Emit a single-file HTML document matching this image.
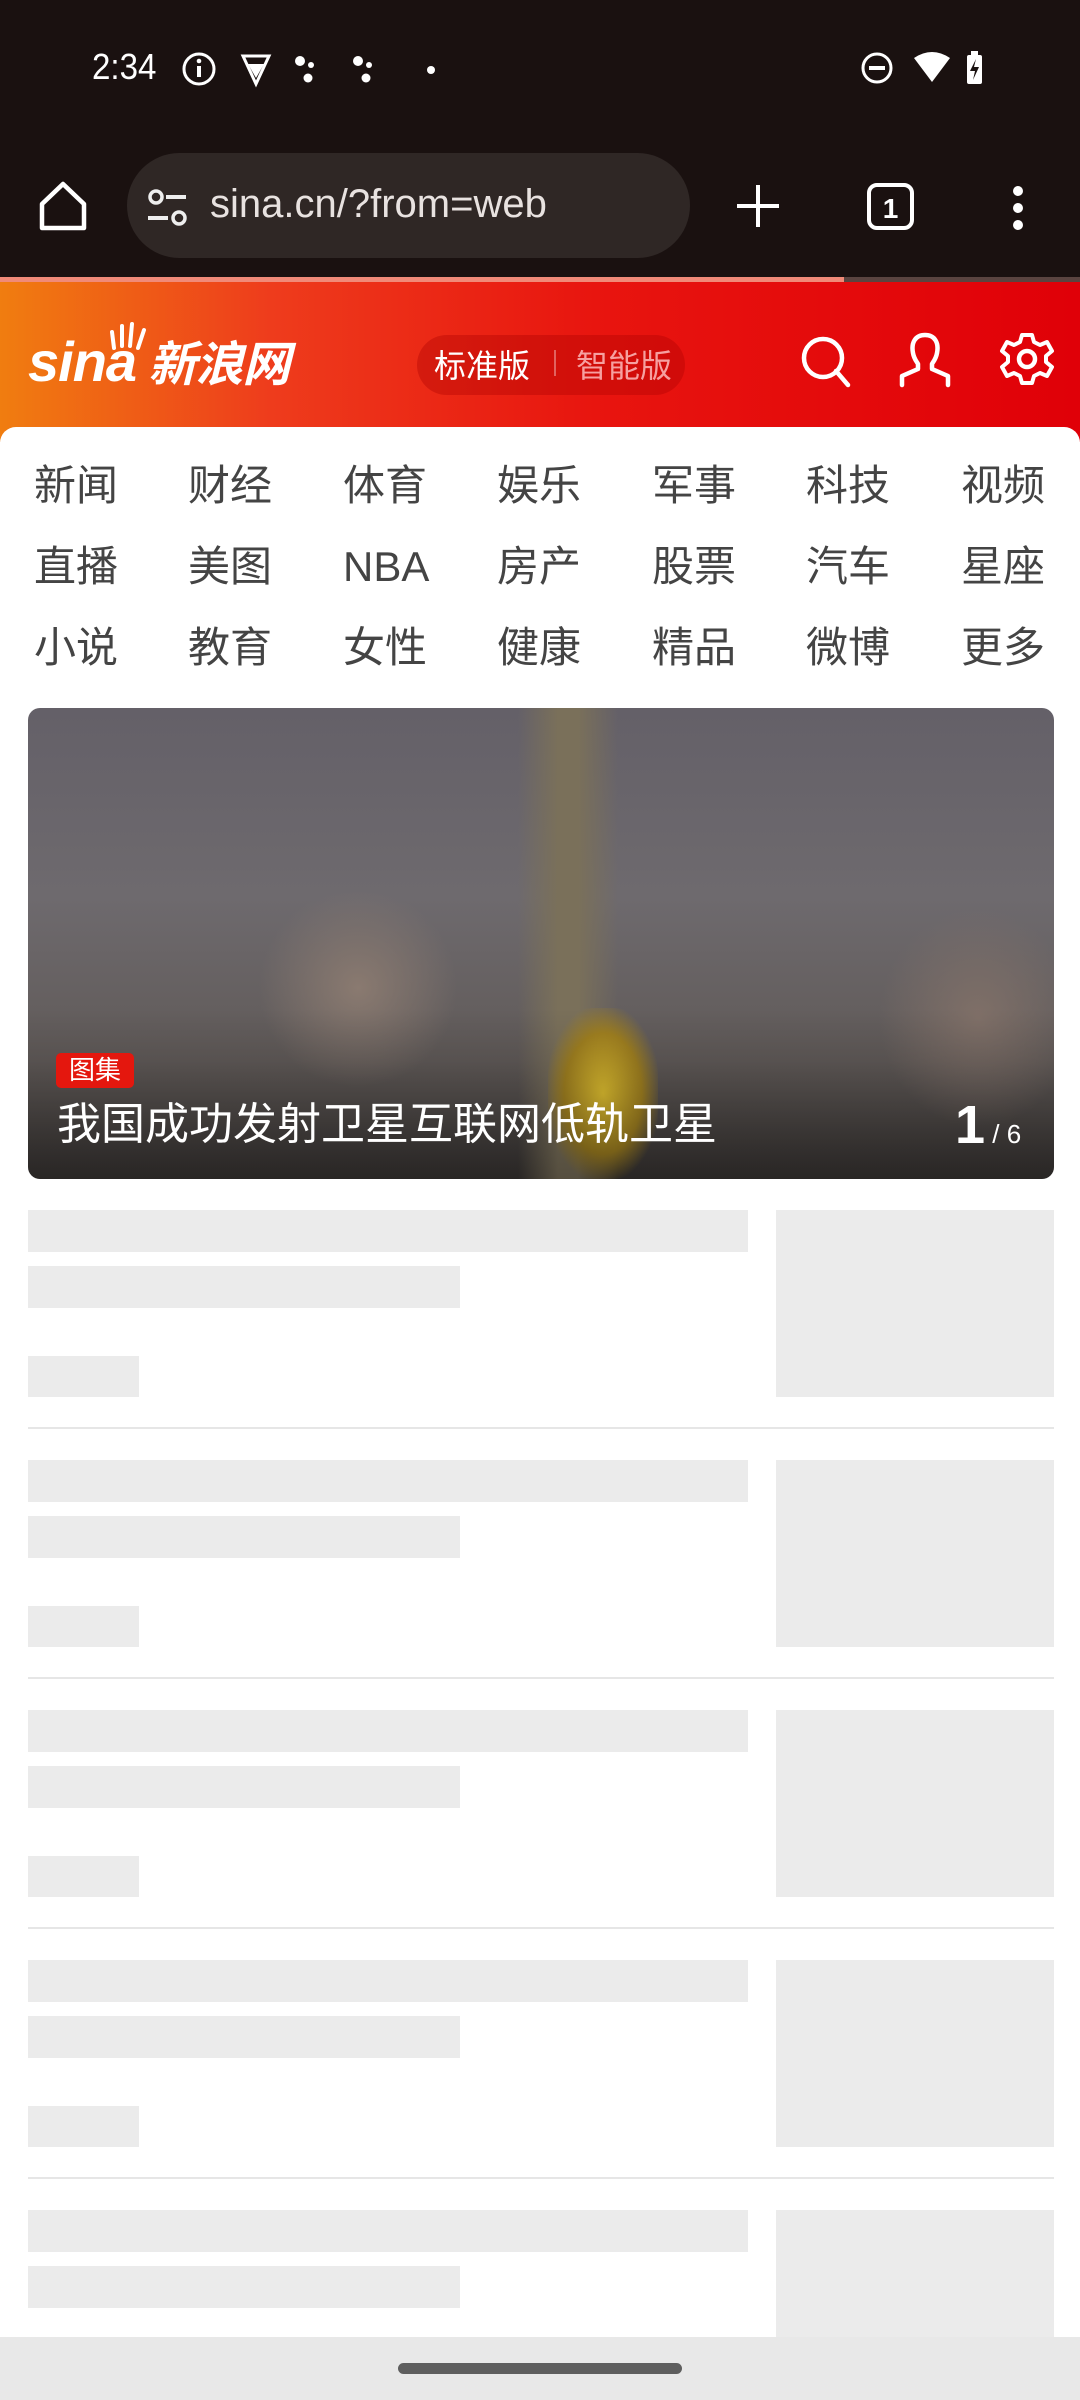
<!DOCTYPE html>
<html><head><meta charset="utf-8"><style>
*{margin:0;padding:0;box-sizing:border-box}
body{width:1080px;height:2400px;overflow:hidden;background:#fff;font-family:"Liberation Sans","Noto Sans CJK SC",sans-serif;position:relative}
.abs{position:absolute}
.sk{position:absolute;background:#ebebeb}
.nav{position:absolute;font-size:42px;color:#444;line-height:42px;white-space:nowrap}
</style></head><body>
<div class="abs" style="left:0;top:0;width:1080px;height:282px;background:#1a1110"></div>
<div class="abs" style="left:92px;top:46px;color:#fff;font-size:36px;transform:scaleX(0.92);transform-origin:left">2:34</div>
<svg class="abs" style="left:180px;top:50px" width="260" height="40" viewBox="0 0 260 40">
<circle cx="19" cy="19" r="15" fill="none" stroke="#fff" stroke-width="3"/><rect x="17" y="16" width="4" height="11" fill="#fff"/><circle cx="19" cy="11" r="2.3" fill="#fff"/>
<path d="M63 6 L89 6 L76 34 Z" fill="none" stroke="#fff" stroke-width="3"/><path d="M68 14 L84 14 L76 28Z" fill="#fff"/>
<circle cx="120" cy="11" r="5" fill="#fff"/><circle cx="131" cy="15" r="3" fill="#fff"/><circle cx="128" cy="28" r="4.5" fill="#fff"/>
<circle cx="178" cy="11" r="5" fill="#fff"/><circle cx="189" cy="15" r="3" fill="#fff"/><circle cx="186" cy="28" r="4.5" fill="#fff"/>
<circle cx="251" cy="20" r="4" fill="#fff"/></svg>
<svg class="abs" style="left:858px;top:48px" width="140" height="42" viewBox="0 0 140 42">
<circle cx="19" cy="20" r="14" fill="none" stroke="#fff" stroke-width="3"/><rect x="11" y="18" width="16" height="4" fill="#fff"/>
<path d="M56 10 Q74 -2 92 10 L74 34 Z" fill="#fff"/>
<rect x="109" y="7" width="15" height="29" rx="2" fill="#fff"/><rect x="113" y="3" width="7" height="5" fill="#fff"/><path d="M118 11 L112 23 L117 23 L115 32 L121 19 L116 19Z" fill="#1a1110"/></svg>
<svg class="abs" style="left:38px;top:180px" width="50" height="52" viewBox="0 0 50 52"><path d="M4 48 L4 24 L25 4 L46 24 L46 48 Z" fill="none" stroke="#fff" stroke-width="4.5" stroke-linejoin="round"/></svg>
<div class="abs" style="left:127px;top:153px;width:563px;height:105px;border-radius:53px;background:#2f2725"></div>
<svg class="abs" style="left:146px;top:188px" width="44" height="42" viewBox="0 0 44 42"><circle cx="10" cy="9" r="6" fill="none" stroke="#eee" stroke-width="3.5"/><rect x="20" y="7" width="20" height="4" fill="#eee"/><rect x="2" y="28" width="20" height="4" fill="#eee"/><circle cx="33" cy="30" r="6" fill="none" stroke="#eee" stroke-width="3.5"/></svg>
<div class="abs" style="left:210px;top:182px;color:#e8e2e0;font-size:40px">sina.cn/?from=web</div>
<svg class="abs" style="left:735px;top:183px" width="46" height="46"><rect x="21" y="2" width="4" height="42" fill="#fff"/><rect x="2" y="21" width="42" height="4" fill="#fff"/></svg>
<svg class="abs" style="left:866px;top:182px" width="50" height="50"><rect x="3" y="3" width="43" height="43" rx="8" fill="none" stroke="#fff" stroke-width="4"/><text x="24.5" y="36" font-size="28" fill="#fff" text-anchor="middle" font-family="Liberation Sans" font-weight="bold">1</text></svg>
<svg class="abs" style="left:1008px;top:183px" width="20" height="50"><circle cx="10" cy="8" r="5" fill="#fff"/><circle cx="10" cy="25" r="5" fill="#fff"/><circle cx="10" cy="42" r="5" fill="#fff"/></svg>
<div class="abs" style="left:0;top:277px;width:844px;height:5px;background:#f08a78"></div>
<div class="abs" style="left:844px;top:277px;width:236px;height:5px;background:#5a4440"></div>
<div class="abs" style="left:0;top:282px;width:1080px;height:160px;background:linear-gradient(90deg,#f07d10 0%,#ee3c1c 25%,#e8150f 55%,#e00008 100%)"></div>
<svg class="abs" style="left:108px;top:320px" width="40" height="32"><path d="M6 28 L4 12 M14 26 L14 6 M22 26 L24 4 M30 28 L36 10" stroke="#fff" stroke-width="4" stroke-linecap="round"/></svg>
<div class="abs" style="left:28px;top:332px;color:#fff;font-size:56px;font-style:italic;font-weight:bold;letter-spacing:-1px;line-height:60px">sina<span style="font-size:48px"> 新浪网</span></div>
<div class="abs" style="left:417px;top:335px;width:268px;height:60px;border-radius:30px;background:rgba(170,0,0,0.35)"></div>
<div class="abs" style="left:434px;top:341px;color:#fff;font-size:32px">标准版</div>
<div class="abs" style="left:554px;top:350px;width:2px;height:26px;background:rgba(255,255,255,.35)"></div>
<div class="abs" style="left:576px;top:341px;color:#f6a0a0;font-size:32px">智能版</div>
<svg class="abs" style="left:798px;top:333px" width="56" height="56"><circle cx="25" cy="25" r="19" fill="none" stroke="#fff" stroke-width="4.5"/><path d="M38 38 L50 52" stroke="#fff" stroke-width="4.5" stroke-linecap="round"/></svg>
<svg class="abs" style="left:896px;top:331px" width="58" height="58"><path d="M29 4 C19 4 15 12 17 22 C18 28 21 31 22 33 L22 38 L6 45 L6 54 M29 4 C39 4 43 12 41 22 C40 28 37 31 36 33 L36 38 L52 45 L52 54" fill="none" stroke="#fff" stroke-width="4.5" stroke-linecap="round" stroke-linejoin="round"/></svg>
<svg class="abs" style="left:998px;top:330px" width="58" height="58" viewBox="0 0 58 58"><path d="M24 5 L34 5 L36 12 L42 15 L49 12 L54 21 L48 26 L48 32 L54 37 L49 46 L42 43 L36 46 L34 53 L24 53 L22 46 L16 43 L9 46 L4 37 L10 32 L10 26 L4 21 L9 12 L16 15 L22 12 Z" fill="none" stroke="#fff" stroke-width="4" stroke-linejoin="round"/><circle cx="29" cy="29" r="8" fill="none" stroke="#fff" stroke-width="4.5"/></svg>
<div class="abs" style="left:0;top:427px;width:1080px;height:40px;background:#fff;border-radius:16px 16px 0 0"></div>
<div class="nav" style="left:34px;top:465px">新闻</div><div class="nav" style="left:188px;top:465px">财经</div><div class="nav" style="left:343px;top:465px">体育</div><div class="nav" style="left:497px;top:465px">娱乐</div><div class="nav" style="left:652px;top:465px">军事</div><div class="nav" style="left:806px;top:465px">科技</div><div class="nav" style="left:961px;top:465px">视频</div>
<div class="nav" style="left:34px;top:546px">直播</div><div class="nav" style="left:188px;top:546px">美图</div><div class="nav" style="left:343px;top:546px">NBA</div><div class="nav" style="left:497px;top:546px">房产</div><div class="nav" style="left:652px;top:546px">股票</div><div class="nav" style="left:806px;top:546px">汽车</div><div class="nav" style="left:961px;top:546px">星座</div>
<div class="nav" style="left:34px;top:627px">小说</div><div class="nav" style="left:188px;top:627px">教育</div><div class="nav" style="left:343px;top:627px">女性</div><div class="nav" style="left:497px;top:627px">健康</div><div class="nav" style="left:652px;top:627px">精品</div><div class="nav" style="left:806px;top:627px">微博</div><div class="nav" style="left:961px;top:627px">更多</div>
<div class="abs" style="left:28px;top:708px;width:1026px;height:471px;border-radius:12px;overflow:hidden;background:linear-gradient(180deg,#646068 0%,#6e6a6e 40%,#605a58 75%,#3a3634 100%)">
<div class="abs" style="left:230px;top:180px;width:200px;height:200px;border-radius:50%;background:radial-gradient(#8a7a70,transparent 70%)"></div>
<div class="abs" style="left:490px;top:0;width:100px;height:471px;background:linear-gradient(90deg,transparent,#7a705a 40%,#7a705a 60%,transparent)"></div>
<div class="abs" style="left:520px;top:300px;width:110px;height:171px;border-radius:40%;background:radial-gradient(#e0c030,#a08020 50%,transparent 75%)"></div>
<div class="abs" style="left:850px;top:200px;width:200px;height:220px;border-radius:50%;background:radial-gradient(#807068,transparent 70%)"></div>
<div class="abs" style="left:0;top:300px;width:1026px;height:171px;background:linear-gradient(180deg,transparent,rgba(0,0,0,.3))"></div>
</div>
<div class="abs" style="left:56px;top:1053px;width:78px;height:35px;background:#e4170e;border-radius:5px;color:#fff;font-size:26px;line-height:35px;text-align:center">图集</div>
<div class="abs" style="left:57px;top:1098px;color:#fff;font-size:44px;line-height:54px">我国成功发射卫星互联网低轨卫星</div>
<div class="abs" style="left:955px;top:1094px;color:#fff;font-size:54px;font-weight:bold">1<span style="font-size:26px;font-weight:normal"> / 6</span></div>
<div class="abs" style="left:0;top:1210px;width:1080px">
 <div class="sk" style="left:28px;top:0;width:720px;height:42px"></div><div class="sk" style="left:28px;top:56px;width:432px;height:42px"></div><div class="sk" style="left:28px;top:146px;width:111px;height:41px"></div><div class="sk" style="left:776px;top:0;width:278px;height:187px"></div><div class="sk" style="left:28px;top:217px;width:1026px;height:2px;background:#e6e6e6"></div>
</div>
<div class="abs" style="left:0;top:1460px;width:1080px">
 <div class="sk" style="left:28px;top:0;width:720px;height:42px"></div><div class="sk" style="left:28px;top:56px;width:432px;height:42px"></div><div class="sk" style="left:28px;top:146px;width:111px;height:41px"></div><div class="sk" style="left:776px;top:0;width:278px;height:187px"></div><div class="sk" style="left:28px;top:217px;width:1026px;height:2px;background:#e6e6e6"></div>
</div>
<div class="abs" style="left:0;top:1710px;width:1080px">
 <div class="sk" style="left:28px;top:0;width:720px;height:42px"></div><div class="sk" style="left:28px;top:56px;width:432px;height:42px"></div><div class="sk" style="left:28px;top:146px;width:111px;height:41px"></div><div class="sk" style="left:776px;top:0;width:278px;height:187px"></div><div class="sk" style="left:28px;top:217px;width:1026px;height:2px;background:#e6e6e6"></div>
</div>
<div class="abs" style="left:0;top:1960px;width:1080px">
 <div class="sk" style="left:28px;top:0;width:720px;height:42px"></div><div class="sk" style="left:28px;top:56px;width:432px;height:42px"></div><div class="sk" style="left:28px;top:146px;width:111px;height:41px"></div><div class="sk" style="left:776px;top:0;width:278px;height:187px"></div><div class="sk" style="left:28px;top:217px;width:1026px;height:2px;background:#e6e6e6"></div>
</div>
<div class="abs" style="left:0;top:2210px;width:1080px">
 <div class="sk" style="left:28px;top:0;width:720px;height:42px"></div><div class="sk" style="left:28px;top:56px;width:432px;height:42px"></div><div class="sk" style="left:776px;top:0;width:278px;height:187px"></div>
</div>
<div class="abs" style="left:0;top:2337px;width:1080px;height:63px;background:#e8e8e8"></div>
<div class="abs" style="left:398px;top:2363px;width:284px;height:11px;border-radius:6px;background:#5e5e5e"></div>
</body></html>
